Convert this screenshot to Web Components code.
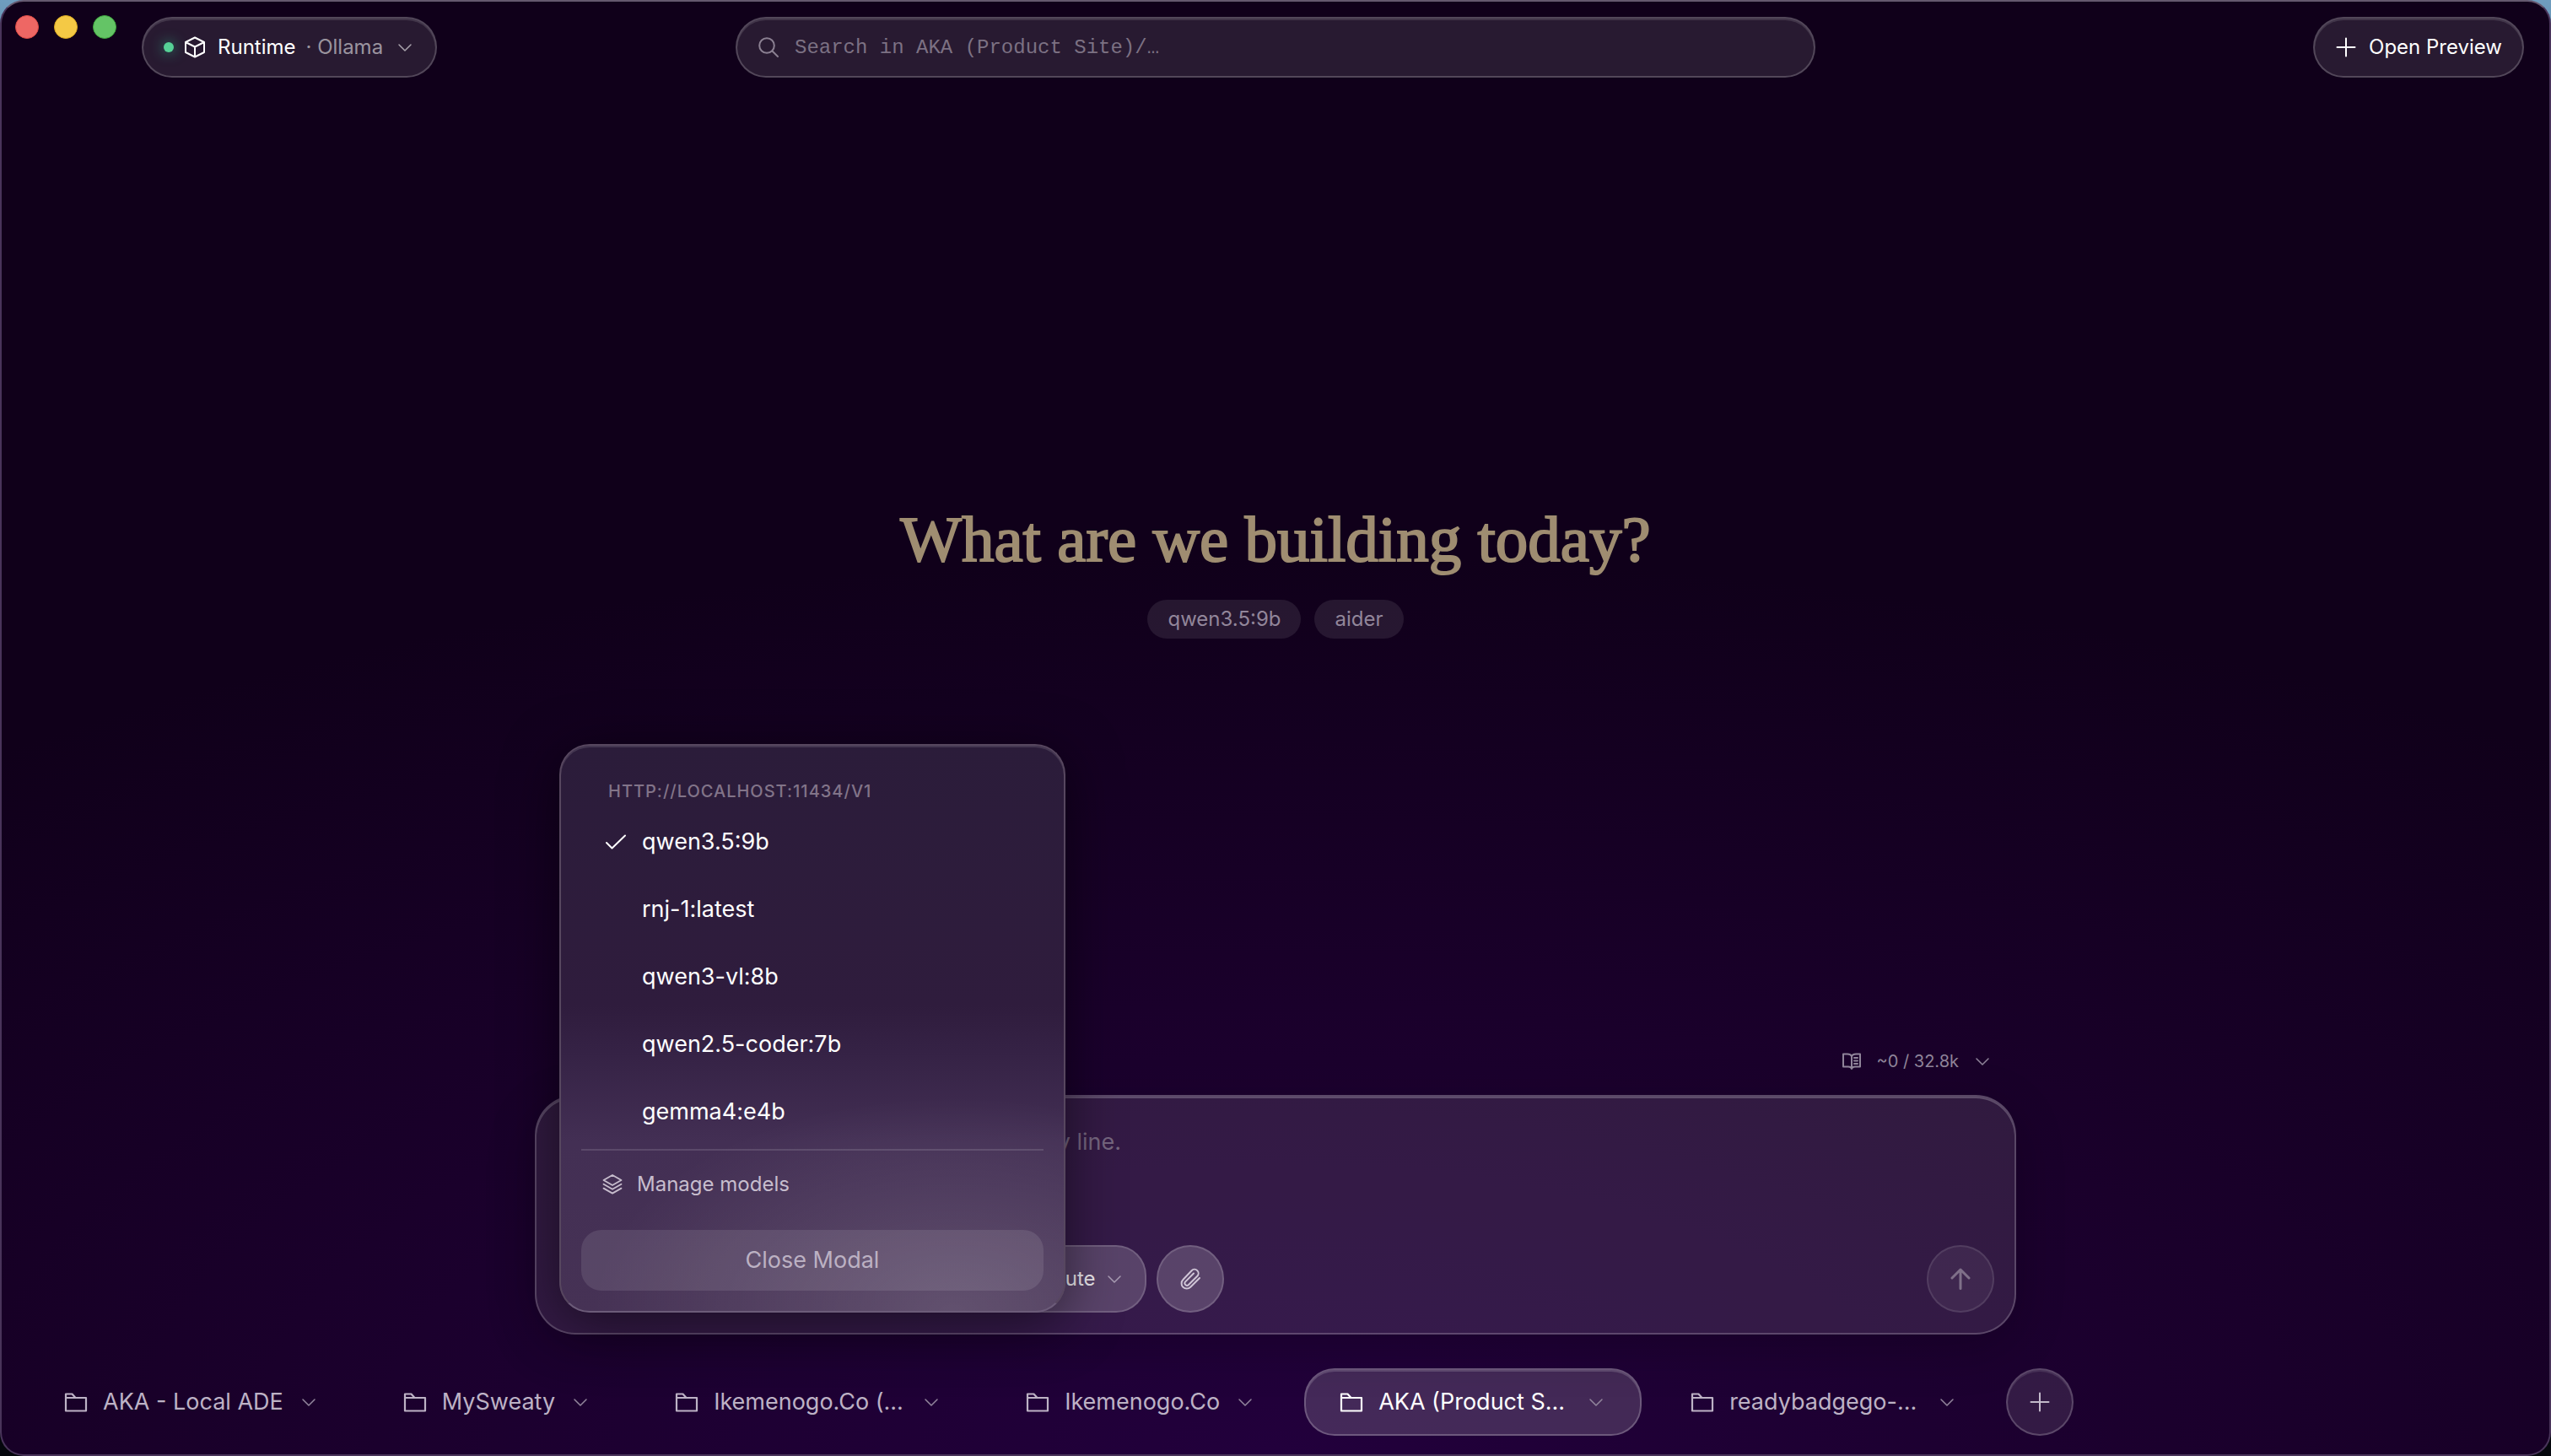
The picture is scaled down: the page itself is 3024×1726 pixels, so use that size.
<!DOCTYPE html>
<html lang="en">
<head>
<meta charset="utf-8">
<meta name="viewport" content="width=device-width, initial-scale=1">
<title>AKA</title>
<style>
  html, body { height: 100%; margin: 0; }
  body {
    background: linear-gradient(#6f9dbf, #05070d 40%);
    font-family: Inter, "Liberation Sans", sans-serif;
    font-size: 24px;
    line-height: 32px;
    color: #fff;
    --edge: rgba(255, 255, 255, .2);
    --glass: rgba(255, 255, 255, .1);
    --large: 27px;
  }
</style>
</head>
<body>

<app-window>
  <traffic-lights slot="start"></traffic-lights>
  <glass-pill slot="start" status icon="cube" caret note="· Ollama">Runtime</glass-pill>
  <search-bar slot="center" placeholder="Search in AKA (Product Site)/…"></search-bar>
  <glass-pill slot="end" icon="plus">Open Preview</glass-pill>

  <app-hero slot="main" heading="What are we building today?">
    <info-chip>qwen3.5:9b</info-chip>
    <info-chip>aider</info-chip>
  </app-hero>

  <prompt-composer slot="composer" context="~0 / 32.8k" placeholder="Describe the task. Hit Enter twice for an empty line.">
    <tool-button slot="tools" plain label="Model"></tool-button>
    <tool-button slot="tools" wide icon="cube" caret label="Agent"></tool-button>
    <tool-button slot="tools" icon="cube" caret>Execute</tool-button>
    <tool-button slot="tools" round icon="clip" label="Attach file"></tool-button>
    <model-menu slot="menu" host="http://localhost:11434/v1">
      <model-option checked>qwen3.5:9b</model-option>
      <model-option>rnj-1:latest</model-option>
      <model-option>qwen3-vl:8b</model-option>
      <model-option>qwen2.5-coder:7b</model-option>
      <model-option>gemma4:e4b</model-option>
    </model-menu>
  </prompt-composer>

  <project-tabs slot="footer">
    <project-tab>AKA - Local ADE</project-tab>
    <project-tab>MySweaty</project-tab>
    <project-tab long>Ikemenogo.Co (...</project-tab>
    <project-tab>Ikemenogo.Co</project-tab>
    <project-tab long active>AKA (Product S...</project-tab>
    <project-tab long>readybadgego-...</project-tab>
  </project-tabs>
</app-window>

<script>
// [width, height, stroke width, shapes]
const ICONS = {
  cube: [26, 26, 2, '<path d="M13 1.5 24 7v12L13 24.5 2 19V7zM2 7l11 5.5L24 7M13 12.5v12"/>'],
  chevron: [24, 24, 1.5, '<path d="m5 9 7 7 7-7"/>'],
  search: [26, 26, 2, '<circle cx="11" cy="11" r="8.8"/><path d="m17.5 17.5 6.5 6.5"/>'],
  plus: [26, 26, 2, '<path d="M13 2.5v21M2.5 13h21"/>'],
  check: [26, 26, 2, '<path d="m2 14 6.500 6.500L24 5.500"/>'],
  layers: [26, 26, 1.8, '<path d="M13 2 23.500 8 13 14 2.500 8zM2.500 12.800l10.500 6 10.500-6M2.500 17.600l10.500 6 10.500-6"/>'],
  clip: [28, 28, 2, '<path d="M25 13 14.200 23.800a6.200 6.200 0 0 1-8.800-8.800L15.600 4.200a4.600 4.600 0 0 1 6.700 6.500L12 21a2.600 2.600 0 0 1-3.800-3.600L18 7.500"/>'],
  up: [28, 28, 3, '<path d="M14 25.500V3M4 13 14 3l10 10"/>'],
  book: [26, 24, 2, '<path d="M13 6c-1-2-3-2.500-5-2.500H3v15h6c2 0 3.500.5 4 2.500.5-2 2-2.500 4-2.500h6v-15h-5c-2 0-4 .5-5 2.500zv15M16 8h4M16 11.500h4M16 15h4"/>'],
  folder: [28, 28, 2.2, '<path d="M2 24.500v-20h7.500L13.500 9H26v15.500zM2 9h11.500"/>']
};

// shared by every element below
class Base extends HTMLElement {
  connectedCallback() {
    if (this.shadowRoot) return;
    this.attachShadow({ mode: "open" }).innerHTML =
      `<style>
        *, :host { box-sizing: border-box; }
        button, input, textarea { font: inherit; color: inherit; margin: 0; border: 0; background: none; outline: 0; }
      </style>` + this.render();
  }
  opt(name, html) {
    return this.hasAttribute(name) ? html : "";
  }
  attr(name) {
    return this.getAttribute(name) || "";
  }
}

customElements.define("ui-icon", class extends Base {
  render() {
    const [w, h, stroke, shapes] = ICONS[this.attr("name")];
    return `
      <style>
        :host { display: block; flex: none; }
        svg { display: block; fill: none; stroke: currentColor; stroke-linecap: round; stroke-linejoin: round; }
      </style>
      <svg width="${w}" height="${h}" viewBox="0 0 ${w} ${h}" stroke-width="${stroke}" aria-hidden="true">${shapes}</svg>`;
  }
});

customElements.define("app-window", class extends Base {
  render() {
    return `
      <style>
        :host {
          display: flex; flex-direction: column; min-height: 100%;
          border: 2px solid #49345a; border-top-color: #65586f; border-radius: 28px;
          background: radial-gradient(ellipse 80% 62% at 50% 100%, #22003c, #1a002b 50%, #10001a) #10001a;
        }
        header {
          display: grid; grid-template-columns: 1fr minmax(0, 1280px) 1fr; align-items: end;
          height: 90px; padding: 16px 16px 0;
        }
        .start { display: flex; align-items: end; gap: 30px; height: 74px; }
        .end { display: flex; justify-content: flex-end; padding-right: 14px; }
        main { flex: 1; display: grid; place-items: center; padding-top: 14px; }
        .composer { display: grid; justify-items: center; padding: 0 32px; }
        footer { padding: 40px 32px 22px; }
      </style>
      <header>
        <div class="start"><slot name="start"></slot></div>
        <slot name="center"></slot>
        <div class="end"><slot name="end"></slot></div>
      </header>
      <main><slot name="main"></slot></main>
      <div class="composer"><slot name="composer"></slot></div>
      <footer><slot name="footer"></slot></footer>`;
  }
});

customElements.define("traffic-lights", class extends Base {
  render() {
    return `
      <style>
        :host { display: flex; gap: 18px; align-self: flex-start; }
        button { width: 28px; height: 28px; padding: 0; border-radius: 50%; }
        .close { background: #ee6764; border: 1px solid #dc4a45; }
        .min { background: #f4c945; border: 1px solid #dba820; }
        .max { background: #64c466; border: 1px solid #3fa63e; }
      </style>
      <button class="close" aria-label="Close"></button>
      <button class="min" aria-label="Minimize"></button>
      <button class="max" aria-label="Zoom"></button>`;
  }
});

customElements.define("glass-pill", class extends Base {
  render() {
    return `
      <style>
        :host { display: block; }
        button {
          display: flex; align-items: center; gap: 12px; height: 72px; padding: 0 24px;
          border: 2px solid var(--edge); border-radius: 36px; background: var(--glass);
          box-shadow: inset 0 2px rgba(255, 255, 255, .12);
        }
        .dot { width: 12px; height: 12px; border-radius: 50%; background: #56d196; box-shadow: 0 0 16px #2f9b78; }
        .label { padding-left: 2px; white-space: nowrap; }
        .note { color: rgba(255, 255, 255, .55); white-space: nowrap; }
        ui-icon[name="chevron"] { padding-left: 2px; color: rgba(255, 255, 255, .6); }
      </style>
      <button type="button">
        ${this.opt("status", `<span class="dot"></span>`)}
        <ui-icon name="${this.attr("icon")}"></ui-icon>
        <span class="label"><slot></slot></span>
        ${this.opt("note", `<span class="note">${this.attr("note")}</span>`)}
        ${this.opt("caret", `<ui-icon name="chevron"></ui-icon>`)}
      </button>`;
  }
});

customElements.define("search-bar", class extends Base {
  render() {
    return `
      <style>
        :host { display: block; }
        label {
          display: flex; align-items: center; gap: 18px; height: 72px; padding: 0 24px;
          border: 2px solid var(--edge); border-radius: 36px; background: var(--glass);
          box-shadow: inset 0 2px rgba(255, 255, 255, .12); color: #8b8092;
        }
        input { flex: 1; min-width: 0; padding: 2px 0 0; font-family: "Liberation Mono", monospace; }
        input::placeholder { color: #7c7183; opacity: 1; }
      </style>
      <label>
        <ui-icon name="search"></ui-icon>
        <input type="text" aria-label="Search" placeholder="${this.attr("placeholder")}">
      </label>`;
  }
});

customElements.define("app-hero", class extends Base {
  render() {
    return `
      <style>
        :host { display: grid; justify-items: center; gap: 24px; }
        h1 {
          margin: 0; font: 400 77px/96px "Liberation Serif", serif;
          color: #9f8d71; -webkit-text-stroke: 2px #9f8d71;
        }
        .chips { display: flex; gap: 16px; }
      </style>
      <h1>${this.attr("heading")}</h1>
      <div class="chips"><slot></slot></div>`;
  }
});

customElements.define("info-chip", class extends Base {
  render() {
    return `
      <style>
        :host {
          display: block; padding: 7px 24px; border-radius: 23px;
          background: rgba(255, 255, 255, .09); color: #92869a;
        }
      </style>
      <slot></slot>`;
  }
});

customElements.define("prompt-composer", class extends Base {
  render() {
    return `
      <style>
        :host { display: block; position: relative; width: 100%; max-width: 1756px; }
        .context {
          display: flex; align-items: center; gap: 16px; margin: 0 28px 24px auto; padding: 0;
          font-size: 20px; color: #8f8499;
        }
        .box {
          display: flex; flex-direction: column; gap: 24px; padding: 32px 24px 24px;
          border: 2px solid var(--edge); border-radius: 48px; background: var(--glass);
          box-shadow: inset 0 2px rgba(255, 255, 255, .22), 0 16px 60px rgba(0, 0, 0, .2);
        }
        textarea { display: block; height: 120px; padding: 2px 14px; resize: none; font-size: var(--large); line-height: 40px; }
        textarea::placeholder { color: #75667f; opacity: 1; }
        .tools { display: flex; gap: 12px; }
        .send {
          display: grid; place-items: center; width: 80px; height: 80px; margin-left: auto; padding: 0;
          border: 2px solid rgba(255, 255, 255, .1); border-radius: 50%;
          background: rgba(255, 255, 255, .06); color: #7f7089;
        }
      </style>
      <button class="context" type="button">
        <ui-icon name="book"></ui-icon>
        <span>${this.attr("context")}</span>
        <ui-icon name="chevron"></ui-icon>
      </button>
      <div class="box">
        <textarea aria-label="Prompt" placeholder="${this.attr("placeholder")}"></textarea>
        <div class="tools">
          <slot name="tools"></slot>
          <button class="send" type="button" aria-label="Send"><ui-icon name="up"></ui-icon></button>
        </div>
      </div>
      <slot name="menu"></slot>`;
  }
});

customElements.define("tool-button", class extends Base {
  render() {
    return `
      <style>
        :host { display: block; }
        button {
          display: flex; align-items: center; justify-content: center; gap: 10px; height: 80px; padding: 0 24px 0 28px;
          border: 2px solid rgba(255, 255, 255, .15); border-radius: 36px; background: rgba(255, 255, 255, .18);
          color: rgba(255, 255, 255, .9);
        }
        :host([wide]) button { width: 184px; }
        :host([plain]) button { width: 274px; border-color: transparent; background: none; }
        :host([round]) button { width: 80px; padding: 0; border-radius: 50%; color: #cfc5d6; }
        ui-icon[name="chevron"] { color: #a99db4; }
      </style>
      <button type="button" ${this.opt("label", `aria-label="${this.attr("label")}"`)}>
        ${this.opt("icon", `<ui-icon name="${this.attr("icon")}"></ui-icon>`)}
        <slot></slot>
        ${this.opt("caret", `<ui-icon name="chevron"></ui-icon>`)}
      </button>`;
  }
});

customElements.define("model-menu", class extends Base {
  render() {
    return `
      <style>
        /* popover over the composer */
        :host {
          display: flex; flex-direction: column; position: absolute; left: 29px; bottom: 26px; width: 600px;
          padding: 22px 24px 24px; border: 2px solid #57475f; border-bottom-color: #6c5c79; border-radius: 36px;
          background:
            radial-gradient(ellipse 72% 38% at 78% 100%, rgba(255, 255, 255, .15), transparent),
            linear-gradient(#2b1c3a, #2f1c3d 46%, #352245 54%, #432f54 70%, #463255) border-box;
          box-shadow: inset 0 2px rgba(255, 255, 255, .12), 0 12px 64px rgba(0, 0, 0, .5);
        }
        .host {
          padding: 20px 32px 10px; font-size: 20px; line-height: 24px; font-weight: 500;
          letter-spacing: 1px; text-transform: uppercase; color: #827489;
        }
        .list { display: grid; gap: 4px; }
        hr { width: 100%; height: 2px; margin: 6px 0 2px; border: 0; background: rgba(255, 255, 255, .13); }
        .manage { display: flex; align-items: center; gap: 16px; height: 76px; padding: 0 24px; color: #c7bdcd; }
        .close {
          height: 72px; margin-top: 16px; border-radius: 24px; font-size: var(--large);
          background: rgba(255, 255, 255, .1); color: #bcb1c3;
        }
      </style>
      <div class="host">${this.attr("host")}</div>
      <div class="list" role="menu"><slot></slot></div>
      <hr>
      <button class="manage" type="button"><ui-icon name="layers"></ui-icon>Manage models</button>
      <button class="close" type="button">Close Modal</button>`;
  }
});

customElements.define("model-option", class extends Base {
  render() {
    return `
      <style>
        :host { display: block; }
        button {
          display: grid; grid-template-columns: 26px 1fr; align-items: center; gap: 18px;
          width: 100%; height: 76px; padding: 0 28px; font-size: var(--large); text-align: left;
        }
        .label { grid-column: 2; }
      </style>
      <button type="button" role="menuitemradio" aria-checked="${this.hasAttribute("checked")}">
        ${this.opt("checked", `<ui-icon name="check"></ui-icon>`)}
        <span class="label"><slot></slot></span>
      </button>`;
  }
});

customElements.define("project-tabs", class extends Base {
  render() {
    return `
      <style>
        :host { display: flex; gap: 16px; }
        button {
          display: grid; place-items: center; flex: none; width: 80px; height: 80px; padding: 0;
          border: 2px solid var(--edge); border-radius: 50%; background: var(--glass);
          box-shadow: inset 0 2px rgba(255, 255, 255, .1); color: #c3bacb;
        }
      </style>
      <slot></slot>
      <button type="button" aria-label="Add project"><ui-icon name="plus"></ui-icon></button>`;
  }
});

customElements.define("project-tab", class extends Base {
  render() {
    return `
      <style>
        :host { display: block; }
        button {
          display: flex; align-items: center; gap: 18px; height: 80px; padding: 0 40px;
          border: 2px solid transparent; border-radius: 36px; font-size: var(--large); color: #bdb2c5;
        }
        span { flex: 1; text-align: left; white-space: nowrap; }
        ui-icon[name="chevron"] { color: #93869d; }
        :host([long]) button { width: 400px; }
        :host([active]) button {
          color: #fff; border-color: rgba(255, 255, 255, .22); background: rgba(255, 255, 255, .16);
          box-shadow: inset 0 2px rgba(255, 255, 255, .16);
        }
      </style>
      <button type="button">
        <ui-icon name="folder"></ui-icon>
        <span><slot></slot></span>
        <ui-icon name="chevron"></ui-icon>
      </button>`;
  }
});
</script>
</body>
</html>
